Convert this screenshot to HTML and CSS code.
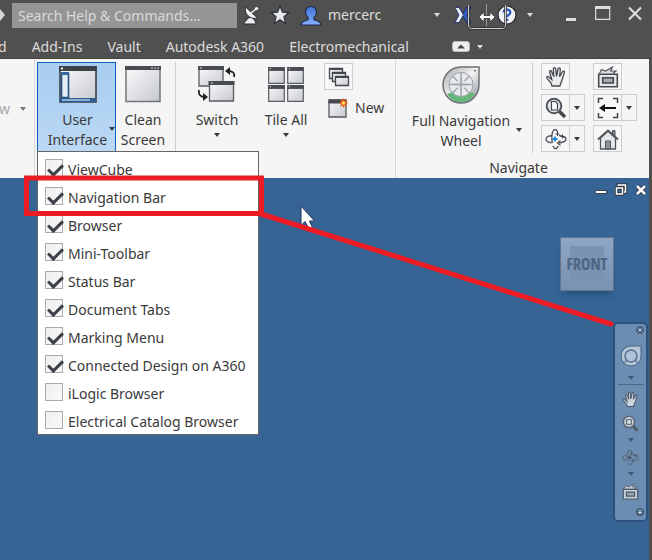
FILE: index.html
```html
<!DOCTYPE html>
<html lang="en">
<head>
<meta charset="utf-8">
<title>Inventor</title>
<link rel="stylesheet" href="styles.css">
</head>
<body>
<svg class="defs" width="0" height="0" aria-hidden="true">
  <defs>
    <linearGradient id="pane" x1="0" y1="0" x2="1" y2="1"><stop offset="0" stop-color="#fafafb"/><stop offset="1" stop-color="#c6c9cf"/></linearGradient>
    <linearGradient id="metal" x1="0" y1="0" x2="1" y2="1"><stop offset="0" stop-color="#a5a7aa"/><stop offset=".5" stop-color="#f2f2f3"/><stop offset="1" stop-color="#85888c"/></linearGradient>
    <linearGradient id="blue" x1="0" y1="0" x2="0" y2="1"><stop offset="0" stop-color="#4475d8"/><stop offset="1" stop-color="#86adff"/></linearGradient>
    <symbol id="win" viewBox="0 0 17 16" preserveAspectRatio="none"><path d="M.7.5h15.600v15H.7z" fill="url(#pane)" stroke="#585b60" stroke-width="1.2"/><path d="M.3.3h16.400v3.400H.3z" fill="#484b51"/><path d="M2 1.500h1" stroke="#ddd"/></symbol>
    <symbol id="hand" viewBox="0 0 22 22"><path d="M7 20 6 17 2.200 12.600C.8 10.800 2.300 9.700 3.800 11l3 2.600L4.700 6.300C4.200 4.400 6 4 6.700 5.700l2.200 5L8.300 3.200C8.200 1.200 10.300 1 10.700 3l.9 7.300L13 3c.5-1.800 2.500-1.400 2.300.5l-.7 7.300L17.300 6c.9-1.600 2.600-.8 2 .9L17 14c-.7 2.400-1.500 3.500-2 6z" fill="#eceded" stroke="#44484f" stroke-width="1.300"/></symbol>
    <symbol id="zoomer" viewBox="0 0 22 22"><path d="m14 14 6 6" stroke="#44474c" stroke-width="3.600"/><circle cx="9" cy="9" r="7.300" fill="#e3e6e9" stroke="#51565e" stroke-width="2"/></symbol>
    <symbol id="orbit" viewBox="0 0 22 22"><path d="M7 7.500C3 8 1 9.500 1 11s2 3.300 5.500 3.800M14 7.500c4.500.6 7 2 7 3.700s-3 3.500-8 3.800M7.500 15C6.500 12 6.600 6.500 7.600 4c1-3.300 4-3.300 5 0M8 18c1.300 3.500 4 3.500 5 0" fill="none" stroke="#555a62" stroke-width="1.400"/><path d="m15.500 12.500-3 2.500 3 2.500" fill="none" stroke="#555a62" stroke-width="1.300"/><path d="M10 8.500v5M7.500 11h5" stroke="var(--plus, #1b86df)" stroke-width="1.800"/><path d="M12.500 4v4M10.500 6h4M17.500 6.500v4M15.500 8.500h4" stroke="#3d4147" stroke-width="1.100"/></symbol>
    <symbol id="lookat" viewBox="0 0 22 22"><path d="m2.500 7.500 2-4 4 1.500 7-4-2 4H19l-3 2.500" fill="#ddd" stroke="#51565e" stroke-width="1.200"/><path d="M1.700 8.200h18.600v12.500H1.700z" fill="#e6e7e8" stroke="#454a52" stroke-width="1.600"/><path d="M5.700 11.700h10.600v5.300H5.700z" fill="#a7aaae" stroke="#454a52" stroke-width="1.600"/></symbol>
    <symbol id="caret" viewBox="0 0 6 4"><path d="M0 0h6L3 4z" fill="currentColor"/></symbol>
  </defs>
</svg>
<div class="app">
  <header class="chrome">
    <div class="titlebar">
      <svg class="flag" width="6" height="14" viewBox="0 0 6 14"><path d="M0 1v12l5-6z" fill="#d8d8d8"/></svg>
      <input class="search" type="text" placeholder="Search Help &amp; Commands..." aria-label="Search Help and Commands">
      <button class="tool" aria-label="Communication center"><svg width="18" height="20" viewBox="0 0 18 20"><path d="M2 19c0-3 3-3 4-6l5-1c0 3 3 4 3 7z" fill="#eceef1" stroke="#292b30"/><path d="M3.500 2C2 9 8 15 15.500 13z" fill="#f7f7f7" stroke="#292b30"/><path d="m9 8 5-4" stroke="#eee" stroke-width="1.600"/><circle cx="14.500" cy="3.500" r="1.600" fill="#fff"/></svg></button>
      <button class="tool" aria-label="Favorites"><svg width="20" height="20" viewBox="0 0 20 20"><path d="m10 1 2.500 6.200 6.500.4-5 4.200 1.700 6.700L10 14.800l-5.700 3.700L6 11.800 1 7.600l6.500-.4z" fill="#e6e9ef" stroke="#2d3036" stroke-width="1.300"/></svg></button>
      <button class="tool user" aria-label="Account"><svg width="22" height="21" viewBox="0 0 22 21"><path d="M1 20c0-4 4-4 7-5.500v-2c-4-4-3-11 3-11s7 7 3 11v2c3 1.500 7 1.500 7 5.500z" fill="url(#blue)" stroke="#1c2947" stroke-width="1.200"/></svg><span>mercerc</span></button>
      <button class="drop push" aria-label="Account menu"><svg width="6" height="4"><use href="#caret"/></svg></button>
      <button class="tool" aria-label="Exchange apps"><svg width="18" height="18" viewBox="0 0 18 18"><path d="M17 1h-4L8 9l5 8h4l-4-8z" fill="#315dbf" stroke="#1b2c5d"/><path d="M1 1.500h4L9.500 9 5 16.500H1L5 9z" fill="#eef1f7" stroke="#253c7c"/></svg></button>
      <button class="tool help" aria-label="Help"><svg width="20" height="20" viewBox="0 0 20 20"><circle cx="10" cy="10" r="9" fill="#f2f4f8" stroke="#24272d" stroke-width="1.200"/><path d="M6.700 7.500C7 3.500 13.500 3.700 13.300 7.500c-.1 2.500-3.200 2.200-3.200 4.700M10.100 13.700v2.300" fill="none" stroke="#2d5ac2" stroke-width="2.400"/></svg></button>
      <button class="drop" aria-label="Help menu"><svg width="6" height="4"><use href="#caret"/></svg></button>
      <div class="winctl">
        <button aria-label="Minimize"><svg width="16" height="16" viewBox="0 0 16 16"><path d="M3 12h10v3H3z" fill="#ddd"/></svg></button>
        <button aria-label="Maximize"><svg width="16" height="16" viewBox="0 0 16 16"><path d="M.7 1v12.300h14V1z" fill="none" stroke="#ddd" stroke-width="1.200"/><path d="M0 0h15.300v3H0z" fill="#ddd"/></svg></button>
        <button aria-label="Close"><svg width="16" height="16" viewBox="0 0 16 16"><path d="m2 1.500 12 12m0-12-12 12" stroke="#ddd" stroke-width="2.200"/></svg></button>
      </div>
      <svg class="splitter" width="40" height="30" viewBox="0 0 40 30"><path d="M1.500 5v20c0 2 1 3.500 3 3.500h31c2 0 3-1.500 3-3.500V5" fill="none" stroke="#333" stroke-width="2.500"/><path d="M1.500 5v20c0 2 1 3.500 3 3.500h31c2 0 3-1.500 3-3.500V5" fill="none" stroke="#d0d0d0"/><path d="M19.500 4v22" stroke="#999"/><path d="m12 17 5-5v3.500h6V12l5 5-5 5v-3.500h-6V22z" fill="#fff" stroke="#333" stroke-width=".8"/></svg>
    </div>
    <nav class="tabs">
      <a href="#">d</a><a href="#">Add-Ins</a><a href="#">Vault</a><a href="#">Autodesk A360</a><a href="#">Electromechanical</a>
      <button class="collapse" aria-label="Minimize ribbon"><svg width="18" height="11" viewBox="0 0 18 11"><rect x=".5" y=".5" width="17" height="10" rx="2.500" fill="#eceef1" stroke="#bbb"/><path d="m5 7.500 4-4 4 4z" fill="#444"/></svg></button>
      <button class="drop" aria-label="Ribbon options"><svg width="6" height="4"><use href="#caret"/></svg></button>
    </nav>
  </header>

  <section class="ribbon">
    <div class="panel cut"><span>w</span><svg width="6" height="4"><use href="#caret"/></svg></div>
    <div class="panel windows">
      <div class="menuhost">
        <button class="big active" aria-expanded="true">
          <svg width="38" height="37" viewBox="0 0 38 37"><path d="M1 1h36v35H1z" fill="url(#pane)" stroke="#3d4047" stroke-width="1.600"/><path d="M0 0h38v5H0z" fill="#3d4047"/><path d="M2 1.500h2v2H2z" fill="#eee"/><path d="M2.500 7.500h7v24h-7z" fill="#e3edf7" stroke="#23507f" stroke-width="1.600"/><path d="M2 6h8v3H2z" fill="#376798"/><path d="M1 32h36v4H1z" fill="#2d5d8f"/><path d="M3 34h28" stroke="#a9cbed" stroke-width="1.500"/></svg>
          <span>User<br>Interface</span>
          <svg class="side" width="6" height="4"><use href="#caret"/></svg>
        </button>
        <div class="menu">
          <label><input type="checkbox" checked>ViewCube</label>
          <label><input type="checkbox" checked>Navigation Bar</label>
          <label><input type="checkbox" checked>Browser</label>
          <label><input type="checkbox" checked>Mini-Toolbar</label>
          <label><input type="checkbox" checked>Status Bar</label>
          <label><input type="checkbox" checked>Document Tabs</label>
          <label><input type="checkbox" checked>Marking Menu</label>
          <label><input type="checkbox" checked>Connected Design on A360</label>
          <label><input type="checkbox">iLogic Browser</label>
          <label><input type="checkbox">Electrical Catalog Browser</label>
        </div>
      </div>
      <button class="big clean">
        <svg width="36" height="37" viewBox="0 0 36 37"><path d="M1 1h34v34.500H1z" fill="url(#pane)" stroke="#71757b" stroke-width="1.500"/><path d="M0 0h36v4H0z" fill="#484b51"/><path d="M26 2h2m1 0h2m1 0h2" stroke="#ddd"/></svg>
        <span>Clean<br>Screen</span>
      </button>
      <i class="rule"></i>
      <button class="big switch">
        <svg width="38" height="37" viewBox="0 0 38 37"><path d="M1 1h24v19H1z" fill="url(#pane)" stroke="#585b60" stroke-width="1.300"/><path d="M0 0h26v4H0z" fill="#484b51"/><path d="M11.500 16h24v19h-24z" fill="url(#pane)" stroke="#585b60" stroke-width="1.300"/><path d="M10.500 15h26v4h-26z" fill="#484b51"/><path d="M2 2h2m9 15h2" stroke="#ddd"/><path d="M36 11c1-5-2-6-7-6M1 24c-1 5 2 7 6 7" fill="none" stroke="#222" stroke-width="1.800"/><path d="m27 5 5-4v8zM10 31l-5-4v8z" fill="#222"/></svg>
        <span>Switch</span>
        <svg width="6" height="4"><use href="#caret"/></svg>
      </button>
      <button class="big tile">
        <svg width="38" height="37" viewBox="0 0 38 37"><use href="#win" x="1" y="1" width="17" height="17"/><use href="#win" x="20" y="1" width="17" height="17"/><use href="#win" x="1" y="19" width="17" height="17"/><use href="#win" x="20" y="19" width="17" height="17"/></svg>
        <span>Tile All</span>
        <svg width="6" height="4"><use href="#caret"/></svg>
      </button>
      <div class="stack">
        <button class="small" aria-label="Cascade"><svg width="22" height="20" viewBox="0 0 22 20"><g fill="url(#pane)" stroke="#44474d" stroke-width="1.300"><path d="M1.500 1.500h13v10h-13z"/><path d="M1 2h14" stroke-width="2"/><path d="M4.500 5.500h13v9h-13z"/><path d="M4 6h14" stroke-width="2"/><path d="M7.500 9.500h13v9h-13z"/><path d="M7 10h14" stroke-width="2"/></g></svg></button>
        <button class="new"><svg width="20" height="20" viewBox="0 0 20 20"><path d="M1 2h17v17H1z" fill="url(#pane)" stroke="#54575c" stroke-width="1.300"/><path d="M.5 1.500h18v4H.5z" fill="#44474d"/><path d="m15.500 0 1 2.500L19 1l-1 3 2 1-2 1 1 3-2.500-1.500-1 2.500-1-2.500L12 9l1-3-2-1 2-1-1-3 2.500 1.500z" fill="#e95b16"/><circle cx="15.500" cy="5" r="1.800" fill="#ffdd62"/></svg><span>New</span></button>
      </div>
    </div>
    <div class="panel navigate">
      <div class="row">
        <button class="big wheel">
          <svg width="38" height="38" viewBox="0 0 38 38"><path d="M18.500 1H37v18a18 18 0 1 1-18.500-18z" fill="url(#metal)" stroke="#6e7175" stroke-width="1.500"/><path d="M5 28c8-4 20-4 28 0-7 11-21 11-28 0z" fill="#66b878"/><circle cx="19" cy="18.500" r="12" fill="#e8eaed" stroke="#999da3"/><path d="M19 7v23M7.500 18.500h23M11 10.500l16 16m0-16-16 16" stroke="#9da1a8" stroke-width="1.400"/><circle cx="19" cy="18.500" r="5" fill="#dfe2e6"/><path d="M19 12v13M12.500 18.500h13" stroke="#9da1a8" stroke-width="1.400"/><path d="m32 4 2 0-1 2z" fill="#333"/></svg>
          <span>Full Navigation<br>Wheel</span>
          <svg class="side" width="6" height="4"><use href="#caret"/></svg>
        </button>
        <i class="rule"></i>
        <div class="tools">
          <div class="split"><button class="small" aria-label="Pan"><svg width="22" height="22"><use href="#hand"/></svg></button></div>
          <div class="split"><button class="small" aria-label="Look at"><svg width="22" height="22"><use href="#lookat"/></svg></button></div>
          <div class="split"><button class="small" aria-label="Zoom"><svg width="22" height="22" viewBox="0 0 22 22"><use href="#zoomer"/><path d="M6.500 4.500h4l2 2v6.500h-6z" fill="#fff" stroke="#40444a" stroke-width="1.200"/></svg></button><button class="arrow" aria-label="Zoom options"><svg width="6" height="4"><use href="#caret"/></svg></button></div>
          <div class="split"><button class="small" aria-label="Previous view"><svg width="22" height="22" viewBox="0 0 22 22"><path d="M1.500 6V1.500H6m10 0h4.500V6m0 10v4.500H16m-10 0H1.500V16" fill="none" stroke="#3f444c" stroke-width="1.500"/><path d="M5 11h14" stroke="#111" stroke-width="2"/><path d="m2 11 6-4v8z" fill="#111"/></svg></button><button class="arrow" aria-label="View options"><svg width="6" height="4"><use href="#caret"/></svg></button></div>
          <div class="split"><button class="small" aria-label="Orbit"><svg width="22" height="22"><use href="#orbit"/></svg></button><button class="arrow" aria-label="Orbit options"><svg width="6" height="4"><use href="#caret"/></svg></button></div>
          <div class="split"><button class="small" aria-label="Home view"><svg width="22" height="22" viewBox="0 0 22 22"><path d="M15.500 2.500h2.500V8l-2.500-2z" fill="#888" stroke="#50555c"/><path d="M3.500 10v11h15V10L11 3z" fill="#e6e7e9" stroke="#50555c" stroke-width="1.300"/><path d="m1 11.500 10-9 10 9" fill="none" stroke="#50555c" stroke-width="2"/><path d="M8.500 13h5v8h-5z" fill="#8c9096" stroke="#50555c"/></svg></button></div>
        </div>
      </div>
      <div class="caption">Navigate</div>
    </div>
  </section>

  <main class="canvas">
    <div class="docctl">
      <button aria-label="Minimize document"><svg width="14" height="14" viewBox="0 0 14 14"><path d="M1.500 7.500h11v3h-11z" fill="#fff" stroke="#3b4250"/></svg></button>
      <button aria-label="Restore document"><svg width="14" height="14" viewBox="0 0 14 14"><path d="M4.500 3V2h7v7H10M2.500 5h6v6h-6z" fill="none" stroke="#303743" stroke-width="3.500"/><path d="M4.500 3V2h7v7H10M2.500 5h6v6h-6z" fill="none" stroke="#fff" stroke-width="1.500"/></svg></button>
      <button aria-label="Close document"><svg width="14" height="14" viewBox="0 0 14 14"><path d="m3 3 8 8m0-8-8 8" stroke="#303743" stroke-width="4.500"/><path d="m3 3 8 8m0-8-8 8" stroke="#fff" stroke-width="2.500"/></svg></button>
    </div>
    <button class="cube"><span>FRONT</span></button>
    <aside class="navbar">
      <button class="shut" aria-label="Close navigation bar"><svg width="8" height="8" viewBox="0 0 8 8"><circle cx="4" cy="4" r="4" fill="#49627f"/><path d="m2.300 2.300 3.400 3.400m0-3.400L2.300 5.700" stroke="#c0cfdf"/></svg></button>
      <button class="nwheel" aria-label="Navigation wheel"><svg width="22" height="22" viewBox="0 0 22 22"><path d="M11 1h10v10A10 10 0 1 1 11 1z" fill="#b5c6d8" stroke="#496480"/><circle cx="11" cy="11" r="6" fill="#b0c3d6" stroke="#58738f" stroke-width="1.500"/><path d="m4.500 17.500 2.500-2.500m8 0 2.500 2.500" stroke="#58738f" stroke-width="1.300"/></svg></button>
      <svg class="tick" width="6" height="4"><use href="#caret"/></svg>
      <i></i>
      <button class="faded" aria-label="Pan view"><svg width="17" height="17"><use href="#hand"/></svg></button>
      <button class="faded" aria-label="Zoom view"><svg width="17" height="17" viewBox="0 0 22 22"><use href="#zoomer"/><path d="M6 6h6v6H6z" fill="#fff" stroke="#40444a" stroke-width="1.300"/></svg></button>
      <svg class="tick" width="6" height="4"><use href="#caret"/></svg>
      <button class="faded" aria-label="Orbit view"><svg width="17" height="17"><use href="#orbit"/></svg></button>
      <svg class="tick" width="6" height="4"><use href="#caret"/></svg>
      <button class="faded" aria-label="Look at face"><svg width="17" height="17"><use href="#lookat"/></svg></button>
      <button class="shut more" aria-label="Customize"><svg width="8" height="8" viewBox="0 0 8 8"><circle cx="4" cy="4" r="4" fill="#405a77"/><path d="M2 2.500h4M2 4l2 2 2-2z" stroke="#c0cfdf" fill="#c0cfdf" stroke-width=".7"/></svg></button>
    </aside>
  </main>
  <svg class="callout" width="652" height="560" viewBox="0 0 652 560" aria-hidden="true">
    <path d="M301 206v19.500l4-4 4 7.500 3.500-1.500-3-6.500h5z" fill="#fff" stroke="#20355a"/>
    <path d="M261 214 611 324" stroke="#ed1c24" stroke-width="5" stroke-linecap="round"/>
    <path d="M26.500 178h235v35.500h-235z" fill="none" stroke="#ed1c24" stroke-width="5"/>
  </svg>
</div>
</body>
</html>
```
FILE: styles.css
```css
* { box-sizing: border-box; }
body { margin: 0; font: 14px/20px "Noto Sans", "Open Sans", sans-serif; color: #3a3a3a; }
button { margin: 0; padding: 0; border: 0; background: none; font: inherit; color: inherit; }
svg { display: block; flex: none; }
.defs { position: absolute; }
.app { position: relative; min-height: 100vh; display: flex; flex-direction: column; background: #4f4f4f; }

.chrome { background: #505050; color: #dcdcdc; height: 59px; border-bottom: 1px solid #464048; }
.titlebar { position: relative; display: flex; align-items: center; height: 30px; padding-right: 8px; }
.flag { margin-right: 6px; }
.search { flex: none; width: 225px; height: 25px; padding: 0 6px; border: 0; background: #959595; font: inherit; color: #eee; }
.search::placeholder { color: #dadada; opacity: 1; }
.tool { display: flex; align-items: center; margin-left: 5px; }
.tool + .tool { margin-left: 10px; }
.user { gap: 6px; }
.push { margin-left: auto; }
.push + .tool { margin-left: 14px; }
.titlebar .help { margin-left: 25px; }
.help + .drop { margin-left: 10px; }
.winctl { display: flex; gap: 16px; margin: 0 1px 2px 30px; }
.splitter { position: absolute; right: 145px; top: 0; }
.tabs { display: flex; align-items: center; height: 29px; padding-top: 4px; gap: 25px; }
.tabs a { color: inherit; text-decoration: none; white-space: nowrap; }
.tabs a:first-child { margin-left: -2px; }
.collapse { margin-left: 18px; }
.collapse + .drop { margin-left: -18px; }

.ribbon { display: flex; height: 119px; margin-right: 3px; background: #f5f5f5; }
.panel { flex: none; padding-top: 3px; border-right: 1px solid #d9d9d9; }
.cut { display: flex; align-items: center; gap: 10px; width: 35px; padding-bottom: 22px; color: #aaa; }
.cut span { margin-left: -1px; }
.cut svg { color: #777; }
.windows { display: flex; align-items: flex-start; width: 361px; padding-left: 2px; }
.menuhost { position: relative; }
.big { position: relative; display: flex; flex-direction: column; align-items: center; height: 90px; padding-top: 4px; white-space: nowrap; }
.big span { margin-top: 7px; }
.big span + svg { margin-top: 3px; }
.big .side { position: absolute; right: 0; bottom: 20px; }
.active { width: 79px; border: 1px solid #0c63c0; background: linear-gradient(#a8cdf0, #bbd8f4); padding-top: 3px; padding-left: 2px; }
.clean { width: 54px; }
.rule { flex: none; width: 1px; height: 91px; background: #cfcfcf; }
.windows .rule { margin-left: 5px; }
.switch { width: 52px; margin-left: 15px; }
.tile { width: 52px; margin-left: 17px; }
.stack { margin: 1px 0 0 12px; }
.small { display: flex; align-items: center; justify-content: center; width: 29px; height: 27px; border: 1px solid #cdcdcd; background: #f7f7f7; }
.new { display: flex; align-items: center; gap: 7px; margin: 8px 0 0 4px; }
.navigate { flex: 1; border: 0; }
.row { display: flex; }
.wheel { width: 130px; }
.wheel .side { right: 4px; }
.row .rule { margin-left: 6px; }
.tools { display: grid; grid-template-columns: 44px 44px; column-gap: 8px; row-gap: 4px; margin: 1px 0 0 8px; align-content: start; }
.split { display: flex; }
.arrow { display: flex; align-items: center; justify-content: center; width: 15px; height: 27px; border: 1px solid #cdcdcd; border-left: 0; }
.caption { margin-top: 5px; padding-right: 8px; text-align: center; }

.menu { position: absolute; z-index: 2; left: 0; top: 89px; width: 222px; padding-top: 2px; border: 1px solid #666; background: #fff; }
.menu label { display: flex; align-items: center; gap: 5px; height: 28px; padding: 3px 0 0 7px; white-space: nowrap; }
.menu input { appearance: none; flex: none; width: 18px; height: 18px; margin: 0 0 3px; border: 1px solid #aaa; background: linear-gradient(135deg, #eee, #fafafa); }
.menu input:checked::before { content: ""; display: block; width: 12px; height: 6px; margin: 4px 0 0 2px; border: solid #3d424a; border-width: 0 0 3px 3px; transform: rotate(-45deg); }

.canvas { position: relative; flex: 1; margin-right: 3px; background: #356495; }
.docctl { display: flex; justify-content: flex-end; gap: 6px; padding: 5px 1px 0 0; }
.cube { position: absolute; right: 35px; top: 59px; width: 54px; height: 54px; border: 1px solid #63758d; background: linear-gradient(#8ea6c4, #7892b3); box-shadow: 0 7px 7px -4px #234b76; color: #50647f; font: bold 16px/36px "Liberation Sans Narrow", "Open Sans Condensed", "DejaVu Sans Condensed", sans-serif; display: flex; justify-content: center; align-items: center; }
.cube span { width: 34px; height: 36px; display: flex; justify-content: center; background: #7893b3; }
.navbar { position: absolute; right: 1px; top: 144px; width: 35px; padding: 2px 0 4px; display: flex; flex-direction: column; align-items: center; border: 2px solid #2d527d; border-radius: 5px; background: #6b8db1; color: #3e5978; }
.navbar .shut { align-self: flex-end; margin-right: 2px; }
.nwheel { margin-top: 11px; }
.navbar i { width: 26px; height: 1px; margin-bottom: 6px; background: #4a6888; }
.faded { opacity: .75; --plus: #3d4147; }
.nwheel + .tick { margin: 9px 0 4px; }
.faded + .faded { margin-top: 7px; }
.faded + .tick { margin: 6px 0 7px; }
.navbar .more { margin-top: 8px; }
.callout { position: absolute; z-index: 3; left: 0; top: 0; pointer-events: none; }
```
